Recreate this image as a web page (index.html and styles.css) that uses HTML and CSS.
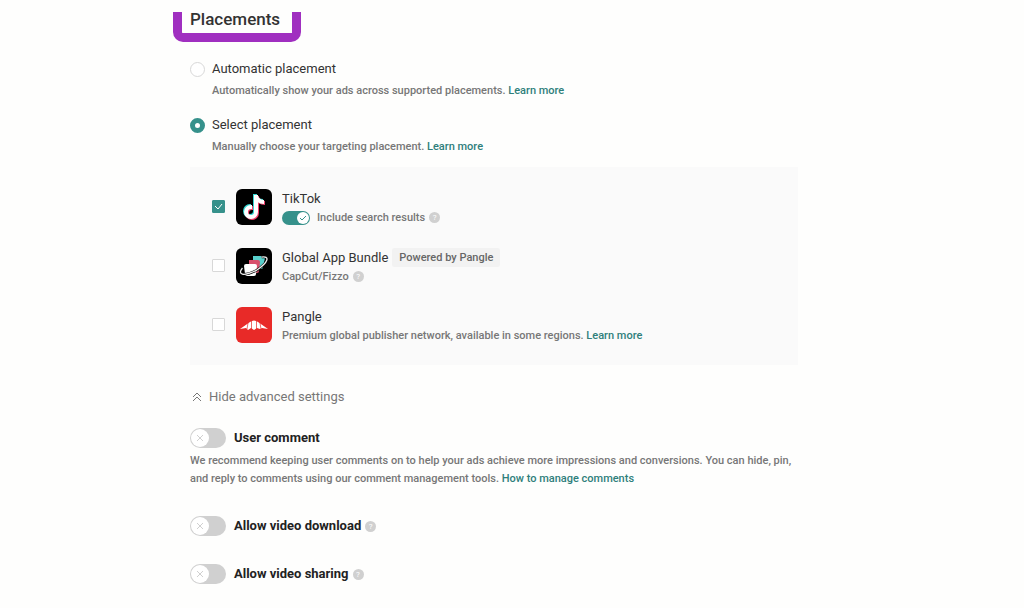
FILE: index.html
```
<!DOCTYPE html>
<html lang="en">
<head>
    <meta charset="UTF-8">
    <meta name="viewport" content="width=device-width, initial-scale=1.0">
    <title>Placements</title>
    <link rel="stylesheet" href="styles.css">
</head>
<body>
    <main class="container">
        <h1 class="title">Placements</h1>

        <div class="option">
            <input type="radio" class="radio" name="placement" id="automatic">
            <label class="name" for="automatic">Automatic placement</label>
            <p class="hint">Automatically show your ads across supported placements. <a href="#">Learn more</a></p>
        </div>
        <div class="option">
            <input type="radio" class="radio" name="placement" id="select" checked>
            <label class="name" for="select">Select placement</label>
            <p class="hint">Manually choose your targeting placement. <a href="#">Learn more</a></p>
        </div>

        <section class="panel">
            <div class="app">
                <input type="checkbox" class="checkbox" id="tiktok" checked>
                <svg class="logo" viewBox="0 0 36 36">
                    <rect width="36" height="36" rx="6" fill="#000"/>
                    <g fill="none" stroke-width="4">
                        <path d="M19 5v17a5 5 0 1 1-5-5h1M19 6c1 4 4 6 8 6" stroke="#35d6d2"/>
                        <path d="M19 5v17a5 5 0 1 1-5-5h1M19 6c1 4 4 6 8 6" transform="translate(2 2)" stroke="#f0416c"/>
                        <path d="M19 5v17a5 5 0 1 1-5-5h1M19 6c1 4 4 6 8 6" transform="translate(1 1)" stroke="#fff"/>
                    </g>
                </svg>
                <div class="info">
                    <label class="name" for="tiktok">TikTok</label>
                    <div class="line">
                        <input type="checkbox" class="switch small" id="search" checked>
                        <label class="sub" for="search">Include search results</label>
                        <button class="help" aria-label="Help">?</button>
                    </div>
                </div>
            </div>
            <div class="app">
                <input type="checkbox" class="checkbox" id="bundle">
                <svg class="logo" viewBox="0 0 36 36">
                    <rect width="36" height="36" rx="6" fill="#000"/>
                    <path d="M17 8h10q2 0 2 2l-2 9q0 2-2 2h-8z" fill="#58cfcb"/>
                    <path d="M13 12h9q2 0 2 2l-1 9q0 2-2 2h-8z" fill="#d8506c"/>
                    <path d="M10 16h9q2 0 2 2l-1 8q0 2-2 2h-7q-2 0-2-2l-1-8q0-2 2-2z" fill="#fff"/>
                    <g fill="none" transform="rotate(-30 18 18)">
                        <path d="M29 14c8 3 4 8-11 9-15-1-19-6-11-9" stroke="#000" stroke-width="2.600"/>
                        <path d="M29 14c8 3 4 8-11 9-15-1-19-6-11-9" stroke="#eee" stroke-width="1.300"/>
                    </g>
                </svg>
                <div class="info">
                    <div class="line">
                        <label class="name" for="bundle">Global App Bundle</label>
                        <span class="tag">Powered by Pangle</span>
                    </div>
                    <div class="line">
                        <span class="sub">CapCut/Fizzo</span>
                        <button class="help" aria-label="Help">?</button>
                    </div>
                </div>
            </div>
            <div class="app">
                <input type="checkbox" class="checkbox" id="pangle">
                <svg class="logo" viewBox="0 0 36 36">
                    <rect width="36" height="36" rx="6" fill="#e82a28"/>
                    <path d="M4 22l10-7q4-3 8 0l10 7-6-1-2 1-3-1-3 2-3-2-3 2-2-2z" fill="#fff"/>
                    <path d="M12 16l-1 6M15.500 14v9M20.500 14v9M24 16l1 6" stroke="#e82a28" stroke-width=".7"/>
                </svg>
                <div class="info">
                    <label class="name" for="pangle">Pangle</label>
                    <p class="sub">Premium global publisher network, available in some regions. <a href="#">Learn more</a></p>
                </div>
            </div>
        </section>

        <button class="advanced">
            <svg class="chevrons" viewBox="0 0 10 10">
                <path d="M1 5l4-4 4 4M1 9l4-4 4 4" fill="none" stroke="#777"/>
            </svg>
            Hide advanced settings
        </button>

        <div class="setting">
            <div class="line">
                <input type="checkbox" class="switch" id="comment">
                <label class="strong" for="comment">User comment</label>
            </div>
            <p class="note">We recommend keeping user comments on to help your ads achieve more impressions and conversions. You can hide, pin, and reply to comments using our comment management tools. <a href="#">How to manage comments</a></p>
        </div>
        <div class="setting">
            <div class="line">
                <input type="checkbox" class="switch" id="download">
                <label class="strong" for="download">Allow video download</label>
                <button class="help" aria-label="Help">?</button>
            </div>
        </div>
        <div class="setting">
            <div class="line">
                <input type="checkbox" class="switch" id="sharing">
                <label class="strong" for="sharing">Allow video sharing</label>
                <button class="help" aria-label="Help">?</button>
            </div>
        </div>
    </main>
</body>
</html>
```
FILE: styles.css
```
* {
    box-sizing: border-box;
}
body {
    margin: 0;
    padding: 12px 36px 20px 0;
    background-color: #fefefd;
    color: #333;
    font-family: Roboto, "Liberation Sans", sans-serif;
    font-size: 13px;
    line-height: 20px;
}
p {
    margin: 0;
}
a {
    color: #2f7f7b;
    text-decoration: none;
}
input {
    appearance: none;
    flex: none;
    margin: 0;
}
button {
    padding: 0;
    border: none;
    background: none;
    font-family: inherit;
}
.container {
    max-width: 608px;
    margin: 0 auto;
}

/* heading with the purple marker round it */
.title {
    width: fit-content;
    margin: 0 0 17px -17px;
    padding: 0 12px 6px 8px;
    border: 9px solid #a02fc0;
    border-top: none;
    border-radius: 0 0 10px 10px;
    font-size: 17px;
    font-weight: 500;
    line-height: 15px;
}

.option {
    display: grid;
    grid-template-columns: 15px 1fr;
    column-gap: 7px;
    row-gap: 2px;
    align-items: center;
    margin-bottom: 14px;
}
.radio {
    width: 15px;
    height: 15px;
    border: 1px solid #d8d8d8;
    border-radius: 50%;
    background-color: #fff;
}
.radio:checked {
    border: 5px solid #36918b;
}
.hint {
    grid-column: 2;
    color: #777;
    font-size: 11px;
    font-weight: 500;
}

.panel {
    display: flex;
    flex-direction: column;
    gap: 18px;
    margin-top: -4px;
    padding: 19px 22px 20px;
    background-color: #fafafa;
}
.app {
    display: flex;
    align-items: center;
}
.checkbox {
    width: 13px;
    height: 13px;
    border: 1px solid #d8d8d8;
    border-radius: 1px;
    background-color: #fff;
}
.checkbox:checked {
    border-color: #36918b;
    background: #36918b url("data:image/svg+xml,%3Csvg xmlns='http://www.w3.org/2000/svg' viewBox='0 0 11 11'%3E%3Cpath d='M2 5l3 3 4-5' fill='none' stroke='white'/%3E%3C/svg%3E");
}
.logo {
    width: 36px;
    height: 36px;
    margin: 0 10px 0 11px;
}
.info {
    display: flex;
    flex-direction: column;
    padding-top: 3px;
    line-height: 19px;
}
.line {
    display: flex;
    align-items: center;
}
.sub {
    color: #777;
    font-size: 11px;
    font-weight: 500;
}
.tag {
    margin: 0 0 0 4px;
    padding: 0 7px;
    border-radius: 2px;
    background-color: #f2f2f2;
    color: #666;
    font-size: 11px;
    font-weight: 500;
}
.help {
    width: 11px;
    height: 11px;
    margin-left: 4px;
    border-radius: 50%;
    background-color: #d0d0d0;
    color: #fff;
    font-size: 8px;
    line-height: 11px;
}

.switch {
    width: 36px;
    height: 20px;
    margin-right: 8px;
    border-radius: 10px;
    background: #d0d0d0 url("data:image/svg+xml,%3Csvg xmlns='http://www.w3.org/2000/svg' viewBox='0 0 18 18'%3E%3Ccircle cx='9' cy='9' r='9' fill='white'/%3E%3Cpath d='M6 6l6 6M12 6l-6 6' stroke='%23d0d0d0'/%3E%3C/svg%3E") 1px 1px / 18px 18px no-repeat;
}
.switch.small {
    width: 28px;
    height: 14px;
    margin-right: 7px;
    background: #36918b url("data:image/svg+xml,%3Csvg xmlns='http://www.w3.org/2000/svg' viewBox='0 0 12 12'%3E%3Ccircle cx='6' cy='6' r='6' fill='white'/%3E%3Cpath d='M3 6l2 2 4-4' fill='none' stroke='%2336918b'/%3E%3C/svg%3E") 15px 1px / 12px 12px no-repeat;
}

.advanced {
    display: flex;
    align-items: center;
    gap: 7px;
    margin: 22px 0 21px 2px;
    color: #777;
    font-size: 13px;
    line-height: 20px;
}
.chevrons {
    width: 10px;
    height: 10px;
}
.setting {
    margin-bottom: 28px;
}
.strong {
    color: #222;
    font-weight: 700;
}
.note {
    margin-top: 4px;
    color: #777;
    font-size: 11px;
    font-weight: 500;
    line-height: 18px;
}
```
